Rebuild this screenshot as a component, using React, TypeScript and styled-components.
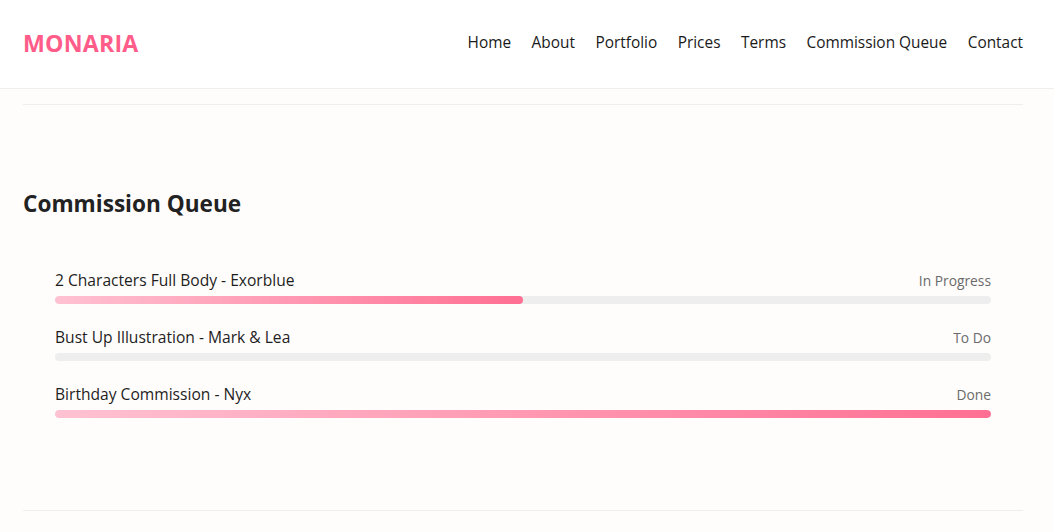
import React from "react";
import styled, { createGlobalStyle } from "styled-components";

const Global = createGlobalStyle`
  html, body { margin: 0; padding: 0; }
  body {
    background: #fefdfb;
    font-family: "Open Sans", "Noto Sans", "Liberation Sans", sans-serif;
    color: #222;
  }
`;

const Header = styled.header`
  height: 89px;
  box-sizing: border-box;
  background: #ffffff;
  border-bottom: 1px solid #eeeeee;
  display: flex;
  align-items: center;
  justify-content: space-between;
  padding: 0 31px 3px 23px;
`;

const Logo = styled.div`
  font-size: 23.2px;
  font-weight: 700;
  color: #ff5c8a;
  letter-spacing: 0.2px;
`;

const Nav = styled.nav`
  display: flex;
  gap: 20.5px;
`;

const NavLink = styled.a`
  font-size: 15.4px;
  color: #1a1a1a;
  text-decoration: none;
`;

const Main = styled.main`
  padding: 0 31px 0 23px;
`;

const Spacer = styled.div`
  height: 15px;
`;

const Rule = styled.hr`
  border: none;
  border-top: 1px solid #eeeeee;
  margin: 0;
`;

const Section = styled.section`
  padding: 83px 0 0;
  height: 322px;
`;

const Title = styled.h2`
  margin: 0 0 50px;
  font-size: 22.6px;
  font-weight: 700;
  color: #222;
`;

const List = styled.div`
  display: flex;
  flex-direction: column;
  gap: 22.5px;
  padding: 0 32px;
`;

const Item = styled.div`
  display: flex;
  flex-direction: column;
  gap: 4.5px;
`;

const ItemHead = styled.div`
  display: flex;
  justify-content: space-between;
  align-items: baseline;
`;

const ItemName = styled.span`
  font-size: 15.6px;
  color: #1e1e1e;
`;

const Status = styled.span`
  font-size: 13.8px;
  color: #6b6b6b;
`;

const Track = styled.div`
  height: 8px;
  border-radius: 4px;
  background: #eeeeee;
  overflow: hidden;
`;

const Fill = styled.div`
  height: 100%;
  border-radius: 4px;
  background: linear-gradient(90deg, #ffc2d2, #ff6f93);
`;

const items = [
  { name: "2 Characters Full Body - Exorblue", status: "In Progress", pct: 50 },
  { name: "Bust Up Illustration - Mark & Lea", status: "To Do", pct: 0 },
  { name: "Birthday Commission - Nyx", status: "Done", pct: 100 },
];

const links = ["Home", "About", "Portfolio", "Prices", "Terms", "Commission Queue", "Contact"];

export default function App() {
  return (
    <>
      <Global />
      <Header>
        <Logo>MONARIA</Logo>
        <Nav>
          {links.map((l) => (
            <NavLink key={l} href="#">{l}</NavLink>
          ))}
        </Nav>
      </Header>
      <Main>
        <Spacer />
        <Rule />
        <Section>
          <Title>Commission Queue</Title>
          <List>
            {items.map((it) => (
              <Item key={it.name}>
                <ItemHead>
                  <ItemName>{it.name}</ItemName>
                  <Status>{it.status}</Status>
                </ItemHead>
                <Track>
                  {it.pct > 0 && <Fill style={{ width: `${it.pct}%` }} />}
                </Track>
              </Item>
            ))}
          </List>
        </Section>
        <Rule />
      </Main>
    </>
  );
}
